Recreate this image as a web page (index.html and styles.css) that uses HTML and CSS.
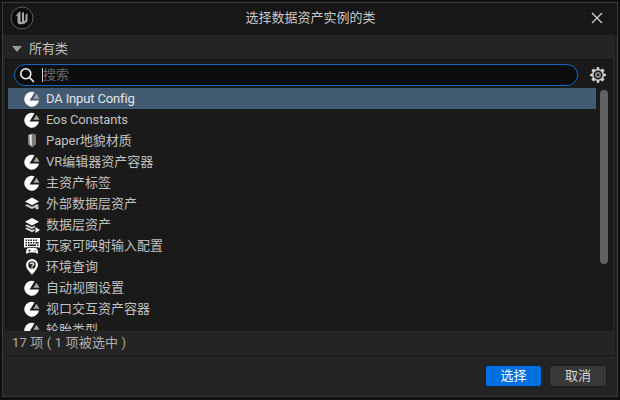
FILE: index.html
```html
<!DOCTYPE html>
<html lang="zh-CN">
<head>
    <meta charset="UTF-8">
    <title>选择数据资产实例的类</title>
    <link rel="stylesheet" href="styles.css">
</head>
<body>
    <svg class="icon-defs" width="0" height="0">
        <symbol id="i-pie" viewBox="0 0 16 16">
            <path fill="#fff" d="M10.500 1.400A7.400 7.400 0 1 0 15 9.500L5.500 9.500z"/>
            <path fill="#a8a8a8" d="M12.500 2.800 15.500 7.800 9.300 7.800z"/>
        </symbol>
        <symbol id="i-paper" viewBox="0 0 16 16">
            <path fill="#7c7c7c" d="M4 2 8 .5 12 1.500V11L8.500 14.500 7 13.500 4 11.500z"/>
            <path fill="#e0e0e0" d="M5.200 2 7.800 1.500V13L6 11.800z"/>
        </symbol>
        <symbol id="i-layers" viewBox="0 0 16 16">
            <path fill="#fff" d="M8 1.500 15 5.500 8 9.200 1 5.500z"/>
            <path fill="#d0d0d0" d="M3 8.200 8 10.800 13 8.200 15 9.400 8 13 1 9.400z"/>
            <circle cx="13" cy="11.800" r="1.800" fill="#c8c8c8"/>
        </symbol>
        <symbol id="i-layers-play" viewBox="0 0 16 16">
            <path fill="#fff" d="M8 1 15 4.800 8 8.500 1 4.800z"/>
            <path fill="#d0d0d0" d="M3 7.500 8 10.100 11 8.600V10.300L8 12 1 8.700zM3 10.500 8 13.100 10.500 12 10.500 14 8 15.200 1 11.700z"/>
            <path fill="#fff" d="M11.500 10 16 13 11.500 16z"/>
        </symbol>
        <symbol id="i-keys" viewBox="0 0 16 16">
            <path fill="#fff" fill-rule="evenodd" d="M0 0H16V9.500H0zM1.500 1.500V3H3V1.500zM4 1.500V3H5.500V1.500zM6.500 1.500V3H8V1.500zM9 1.500V3H10.500V1.500zM11.500 1.500V3H13V1.500zM1.500 4V5.500H3V4zM4 4V5.500H5.500V4zM6.500 4V5.500H8V4zM9 4V5.500H10.500V4zM11.500 4V5.500H14.500V4zM1.500 6.500V8H3V6.500zM4 6.500V8H12V6.500zM13 6.500V8H14.500V6.500z" />
            <path fill="#1a1a1a" d="M2 9.500H14V16H2z"/>
            <path fill="#fff" fill-rule="evenodd" d="M5 10H11C13 10 14 12 14 14.500 14 16 12.500 16 11.500 14.500H4.500C3.500 16 2 16 2 14.500 2 12 3 10 5 10zM5 11.500V12.300H4.200V13H5V13.800H5.700V13H6.500V12.300H5.700V11.500zM10.500 12V13H11.500V12z"/>
        </symbol>
        <symbol id="i-pin" viewBox="0 0 16 16">
            <path fill="#fff" fill-rule="evenodd" d="M8 0A6 6 0 0 0 2 6C2 9.500 6 13 8 16 10 13 14 9.500 14 6A6 6 0 0 0 8 0z"/>
            <circle cx="8" cy="6" r="3.700" fill="#1a1a1a"/>
            <path fill="none" stroke="#fff" stroke-width="1.300" d="M6.300 5.200C6.500 3.500 9.700 3.600 9.700 5.200 9.700 6.300 8 6.300 8 7.400"/>
            <rect x="7.400" y="8" width="1.200" height="1.200" fill="#fff"/>
        </symbol>
    </svg>

    <div class="window">
        <div class="title-bar">
            <svg class="ue-logo" viewBox="0 0 24 24" width="24" height="24">
                <circle cx="12" cy="12" r="11" fill="#0c0c0c" stroke="#5e5e5e" stroke-width="1"/>
                <path fill="#a8a8a8" d="M8.500 6.500 10.500 5.500V15C10.500 16.200 11.500 16.200 12 15.700V7.500L14 5.500V15.500L15.500 14V9L17.500 7V15L13.500 18.500 12.500 17.500C11 19 7.500 18.500 7.500 16V9.500L5.500 10.500z"/>
            </svg>
            <div class="title">选择数据资产实例的类</div>
            <svg class="close" viewBox="0 0 12 12" width="12" height="12">
                <path d="M1 1 11 11M11 1 1 11" stroke="#d0d0d0" stroke-width="1.300" fill="none"/>
            </svg>
        </div>

        <div class="panel">
            <div class="section-head">
                <span class="caret"></span>
                <span>所有类</span>
            </div>

            <div class="content">
                <div class="search-row">
                    <div class="search-box">
                        <svg viewBox="0 0 16 16" width="16" height="16">
                            <circle cx="6.800" cy="6.800" r="5" fill="none" stroke="#fff" stroke-width="1.500"/>
                            <path d="M10.500 10.500 15 15" stroke="#fff" stroke-width="1.500"/>
                        </svg>
                        <span class="cursor"></span>
                        <span class="placeholder">搜索</span>
                    </div>
                    <svg class="gear" viewBox="0 0 16 16" width="16" height="16">
                        <path fill="#cfcfcf" fill-rule="evenodd" d="M7 0H9L9.400 2.200 10.700 2.700 12.600 1.400 14.600 3.400 13.300 5.300 13.800 6.600 16 7V9L13.800 9.400 13.300 10.700 14.600 12.600 12.600 14.600 10.700 13.300 9.400 13.800 9 16H7L6.600 13.800 5.300 13.300 3.400 14.600 1.400 12.600 2.700 10.700 2.200 9.400 0 9V7L2.200 6.600 2.700 5.300 1.400 3.400 3.400 1.400 5.300 2.700 6.600 2.200zM8 3.500A4.500 4.500 0 1 0 8 12.500 4.500 4.500 0 1 0 8 3.500z"/>
                        <circle cx="8" cy="8" r="3" fill="#8a8a8a"/>
                        <circle cx="8" cy="8" r="1.300" fill="#2a2a2a"/>
                    </svg>
                </div>

                <div class="list-wrap">
                    <ul class="class-list">
                        <li class="row row-en selected"><svg class="row-icon"><use href="#i-pie"/></svg>DA Input Config</li>
                        <li class="row row-en"><svg class="row-icon"><use href="#i-pie"/></svg>Eos Constants</li>
                        <li class="row"><svg class="row-icon"><use href="#i-paper"/></svg>Paper地貌材质</li>
                        <li class="row"><svg class="row-icon"><use href="#i-pie"/></svg>VR编辑器资产容器</li>
                        <li class="row"><svg class="row-icon"><use href="#i-pie"/></svg>主资产标签</li>
                        <li class="row"><svg class="row-icon"><use href="#i-layers"/></svg>外部数据层资产</li>
                        <li class="row"><svg class="row-icon"><use href="#i-layers-play"/></svg>数据层资产</li>
                        <li class="row"><svg class="row-icon"><use href="#i-keys"/></svg>玩家可映射输入配置</li>
                        <li class="row"><svg class="row-icon"><use href="#i-pin"/></svg>环境查询</li>
                        <li class="row"><svg class="row-icon"><use href="#i-pie"/></svg>自动视图设置</li>
                        <li class="row"><svg class="row-icon"><use href="#i-pie"/></svg>视口交互资产容器</li>
                        <li class="row"><svg class="row-icon"><use href="#i-pie"/></svg>轮胎类型</li>
                    </ul>
                    <div class="scroll-track"><div class="scroll-thumb"></div></div>
                </div>
            </div>

            <div class="status">17 项 ( 1 项被选中 )</div>
        </div>

        <div class="actions">
            <button class="btn btn-primary">选择</button>
            <button class="btn btn-cancel">取消</button>
        </div>
    </div>
</body>
</html>
```

FILE: styles.css
```css
* {
    box-sizing: border-box;
}
body {
    margin: 0;
    width: 620px;
    height: 400px;
    overflow: hidden;
    background: #111;
    font-family: Roboto, "Noto Sans CJK SC", sans-serif;
    font-size: 13px;
    line-height: 16px;
    color: #c0c0c0;
}
.icon-defs {
    position: absolute;
}
.window {
    width: 616px;
    height: 395px;
    margin: 2px 2px 3px 2px;
    background: #242424;
    border: 1px solid #3a3a3a;
    display: flex;
    flex-direction: column;
}
.title-bar {
    height: 32px;
    flex: none;
    background: #171717;
    display: flex;
    align-items: center;
    padding: 0 14px 2px 7px;
}
.title {
    flex: 1;
    text-align: center;
    color: #c8c8c8;
    padding-right: 4px;
}
.panel {
    height: 321px;
    flex: none;
    margin: 0 1px 0 2px;
    border-bottom: 1px solid #1a1a1a;
    border-right: 1px solid #1a1a1a;
    display: flex;
    flex-direction: column;
}
.section-head {
    height: 24px;
    flex: none;
    display: flex;
    align-items: center;
    gap: 7px;
    padding-left: 7px;
    padding-top: 3px;
}
.caret {
    width: 0;
    height: 0;
    border-left: 5px solid transparent;
    border-right: 5px solid transparent;
    border-top: 6px solid #9a9a9a;
}
.content {
    height: 272px;
    flex: none;
    background: #1a1a1a;
    margin-right: 2px;
    border-top: 1px solid #141414;
    border-left: 1px solid #141414;
    padding: 4px 0 0 2px;
    display: flex;
    flex-direction: column;
}
.search-row {
    height: 24px;
    flex: none;
    display: flex;
    align-items: flex-start;
    padding-left: 6px;
}
.search-box {
    width: 564px;
    height: 22px;
    background: #0c0c0c;
    border: 1.500px solid #0e66c4;
    border-radius: 11px;
    display: flex;
    align-items: center;
    padding-left: 4px;
}
.cursor {
    width: 1px;
    height: 14px;
    background: #d0d0d0;
    margin-left: 7px;
}
.placeholder {
    color: #6a6a6a;
}
.gear {
    margin: 3px 0 0 12px;
}
.list-wrap {
    flex: 1;
    min-height: 0;
    display: flex;
}
.class-list {
    width: 588px;
    height: 100%;
    overflow: hidden;
    margin: 0;
    padding: 0;
    list-style: none;
    flex: none;
}
.row {
    height: 21px;
    display: flex;
    align-items: center;
    color: #c0c0c0;
    white-space: nowrap;
}
.row-en {
    letter-spacing: -0.15px;
}
.row.selected {
    background: #435a73;
    color: #e4e4e4;
}
.row-icon {
    width: 16px;
    height: 16px;
    margin: 0 6px 0 16px;
    flex: none;
}
.scroll-track {
    flex: 1;
    padding: 2px 4px 0;
}
.scroll-thumb {
    width: 8px;
    height: 174px;
    background: #616161;
    border-radius: 4px;
}
.status {
    flex: 1;
    display: flex;
    align-items: center;
    padding: 0 0 1px 7px;
    color: #b0b0b0;
    white-space: pre;
    letter-spacing: 0.15px;
}
.actions {
    flex: 1;
    display: flex;
    justify-content: flex-end;
    align-items: center;
    gap: 7px;
    padding-right: 10px;
}
.btn {
    height: 22px;
    padding: 0;
    border: 1px solid #1a1a1a;
    border-radius: 3px;
    font: inherit;
}
.btn-primary {
    width: 57px;
    background: #0070e0;
    border-color: #12253a;
    color: #fff;
}
.btn-cancel {
    width: 58px;
    background: #383838;
    color: #d8d8d8;
}
```
